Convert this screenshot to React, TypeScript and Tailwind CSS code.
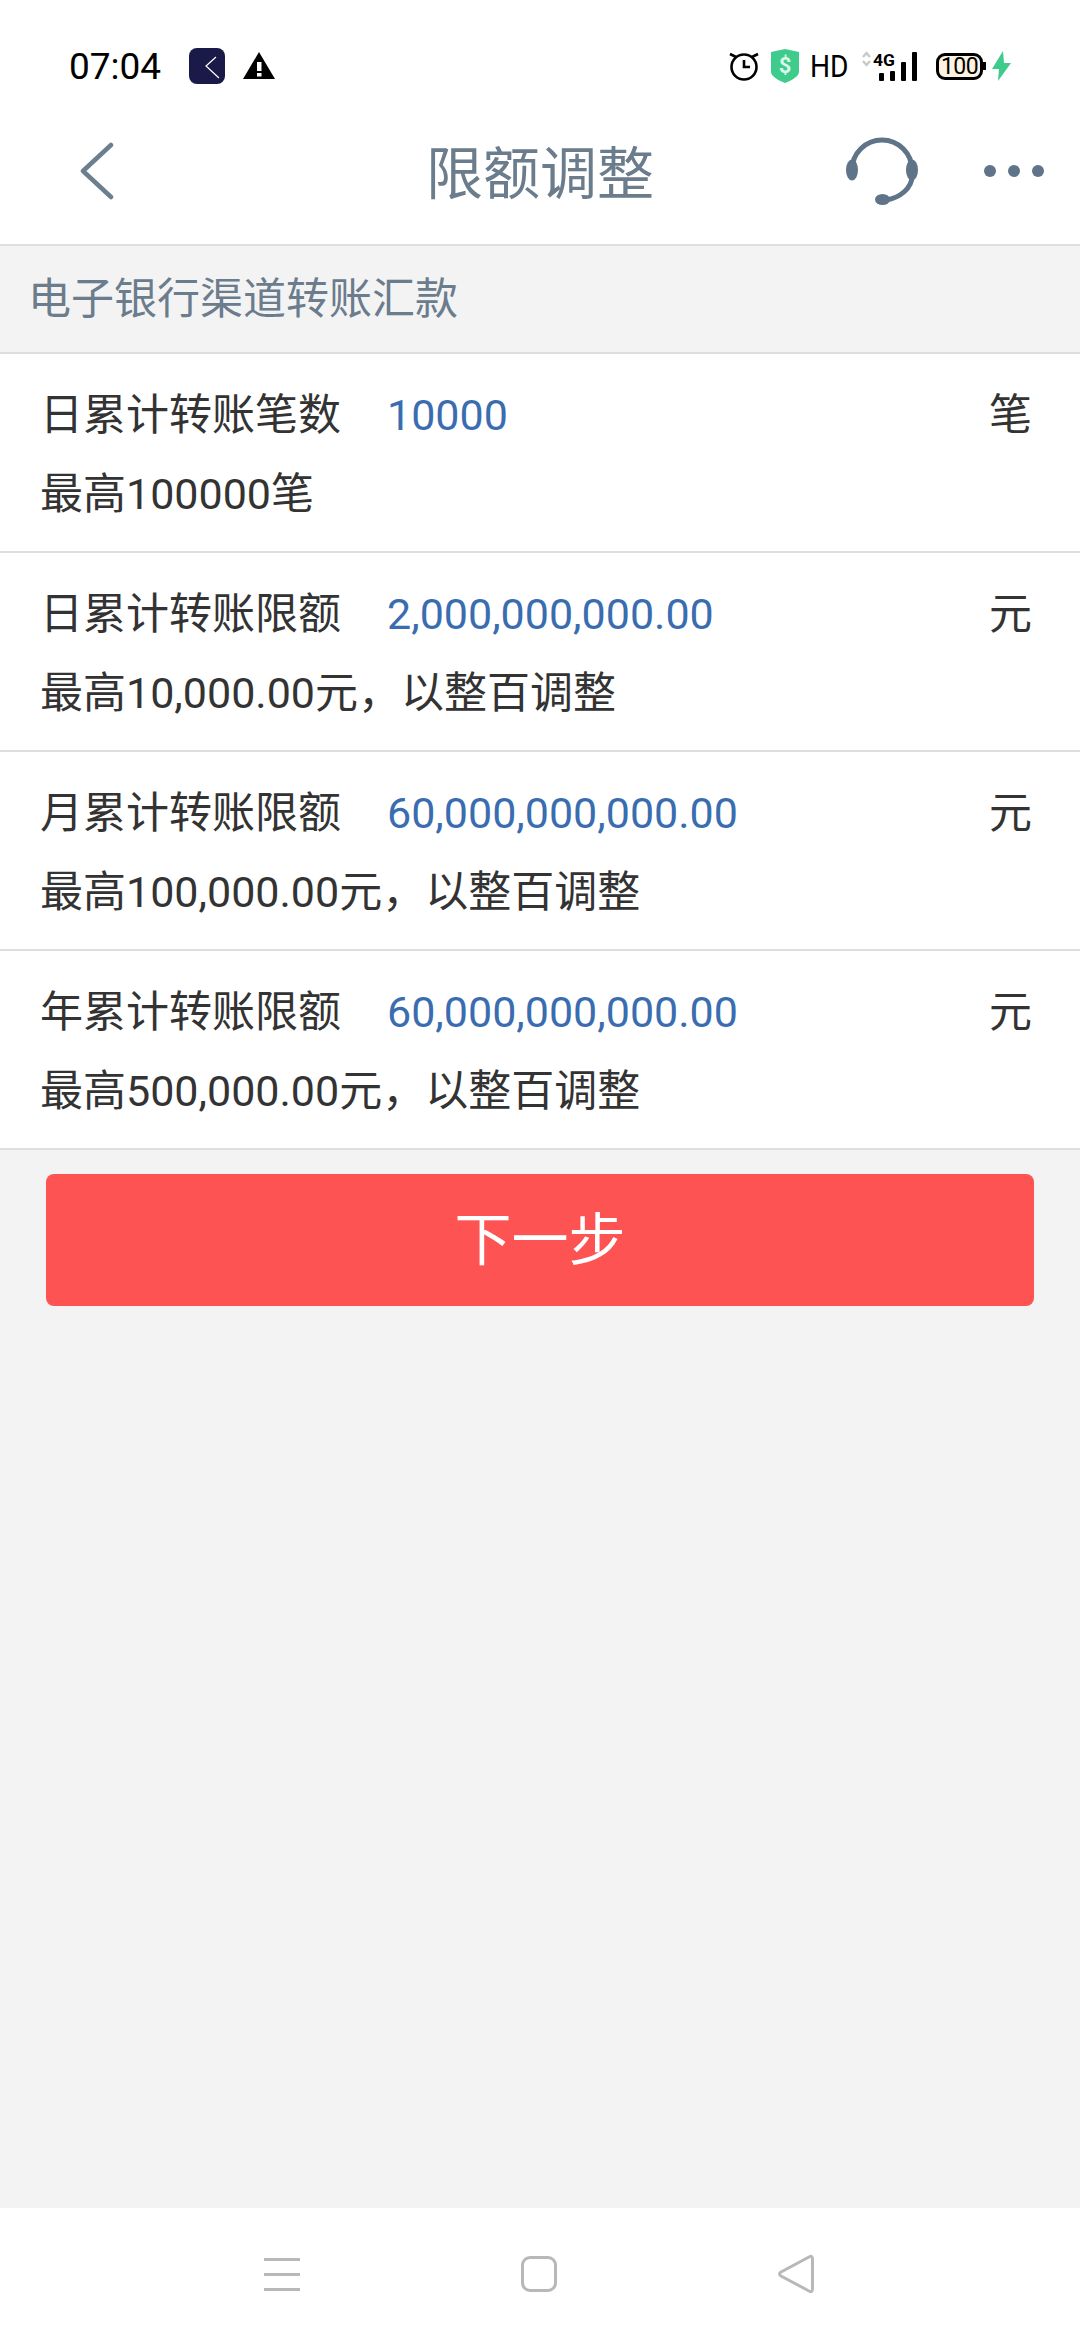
const FONT = "font-['Roboto','Noto_Sans_CJK_SC',sans-serif]"

const limits = [
  { label: '日累计转账笔数', value: '10000', unit: '笔', hint: '最高100000笔' },
  { label: '日累计转账限额', value: '2,000,000,000.00', unit: '元', hint: '最高10,000.00元，以整百调整' },
  { label: '月累计转账限额', value: '60,000,000,000.00', unit: '元', hint: '最高100,000.00元，以整百调整' },
  { label: '年累计转账限额', value: '60,000,000,000.00', unit: '元', hint: '最高500,000.00元，以整百调整' },
]

function StatusBar() {
  return (
    <div className="flex h-[122px] items-center justify-between pl-[69px] pr-[69px] pt-[10px] bg-white">
      <div className="flex items-center">
        <span className="w-[120px] text-[37px] leading-none text-black">07:04</span>
        <svg width="36" height="36" viewBox="0 0 36 36" fill="none">
          <rect width="36" height="36" rx="8" fill="#1a1a48" />
          <path d="M27 9 17 18l13 12" stroke="#fff" strokeWidth="1.2" />
        </svg>
        <svg className="ml-[18px]" width="32" height="28" viewBox="0 0 32 28">
          <path d="M16 0 32 27H0Z" fill="#000" />
          <rect x="14" y="10" width="4.5" height="9" fill="#fff" />
          <rect x="14" y="21" width="4.5" height="3.5" fill="#fff" />
        </svg>
      </div>
      <div className="flex items-center">
        <svg width="30" height="32" viewBox="0 0 30 32" fill="none" stroke="#000" strokeWidth="2.6">
          <circle cx="15" cy="17" r="12.5" />
          <path d="M15 10v7h6M1 4l6 3M29 4l-6 3" />
        </svg>
        <svg className="ml-[12px]" width="28" height="34" viewBox="0 0 28 34">
          <path d="M14 0 28 3v20c0 4-8 9-14 11C8 32 0 27 0 23V3Z" fill="#3ecb8b" />
          <text x="14" y="24" textAnchor="middle" fontSize="22" fontWeight="700" fill="#d9f7e8" fontFamily="Roboto">$</text>
        </svg>
        <span className="ml-[11px] w-[36px] origin-left scale-x-[0.88] font-['Roboto'] text-[32px] leading-none text-black">HD</span>
        <svg className="ml-[15px]" width="57" height="32" viewBox="0 0 57 32">
          <path d="M2 7l3.500-4 3.500 4M2 11l3.500 4 3.500-4" fill="none" stroke="#c8c8c8" strokeWidth="2.4" />
          <text x="12" y="16" fontSize="17" fontWeight="700" fill="#000" fontFamily="Roboto" textLength="22" lengthAdjust="spacingAndGlyphs">4G</text>
          <rect x="18" y="23" width="5" height="8" rx="1" fill="#000" />
          <rect x="29" y="21" width="5" height="10" rx="1" fill="#000" />
          <rect x="40" y="12" width="5" height="19" rx="1" fill="#000" />
          <rect x="51" y="2" width="5" height="29" rx="1" fill="#000" />
        </svg>
        <div className="ml-[18px] flex h-[27px] w-[47px] items-center justify-center rounded-[9px] border-[3px] border-black bg-[#fdf3e0] text-[23px] leading-none tracking-tight text-black">
          100
        </div>
        <div className="h-2 w-[3px] bg-black" />
        <svg className="ml-[6px]" width="19" height="30" viewBox="0 0 19 30">
          <path d="M11 0 0 18h7l-1 12 13-18h-7Z" fill="#3ecb8b" />
        </svg>
      </div>
    </div>
  )
}

function Header() {
  return (
    <div className="grid h-[124px] grid-cols-[1fr_auto_1fr] items-center border-b-2 border-[#dedede] bg-white pb-[24px]">
      <div className="pl-[80px]">
        <svg width="34" height="58" viewBox="0 0 34 58" fill="none" stroke="#6b7f8f" strokeWidth="4.5" strokeLinecap="round" strokeLinejoin="round">
          <path d="M31 3 3 29l28 26" />
        </svg>
      </div>
      <h1 className="pt-[6px] text-[57px] leading-none text-[#6b7c8c]">限额调整</h1>
      <div className="flex items-center justify-end gap-[66px] pr-[36px]">
        <svg width="72" height="70" viewBox="0 0 72 70" fill="none">
          <path d="M6 34A30 30 0 0 1 66 34v6c0 12-12 22-26 24" stroke="#5f7488" strokeWidth="5" />
          <ellipse cx="6" cy="34" rx="6" ry="10.500" fill="#5f7488" />
          <ellipse cx="66" cy="34" rx="6" ry="10.500" fill="#5f7488" />
          <ellipse cx="36.500" cy="63.500" rx="7.500" ry="5.500" fill="#5f7488" />
        </svg>
        <div className="flex items-center gap-3">
          <div className="h-3 w-3 rounded-full bg-[#5f7488]" />
          <div className="h-3 w-3 rounded-full bg-[#5f7488]" />
          <div className="h-3 w-3 rounded-full bg-[#5f7488]" />
        </div>
      </div>
    </div>
  )
}

export default function App() {
  return (
    <div className={`flex h-[2340px] w-[1080px] flex-col bg-[#f3f3f4] ${FONT}`}>
      <StatusBar />
      <Header />

      {/* Section title */}
      <div className="flex h-[108px] items-center border-b-2 border-[#dedede] pl-[28px] text-[43px] text-[#6b7c8c]">
        电子银行渠道转账汇款
      </div>

      {/* Limit rows */}
      {limits.map((row) => (
        <div key={row.label} className="flex h-[199px] flex-col justify-center border-b-2 border-[#dedede] bg-white pl-10 pr-[48px] pt-[5px] text-[43px] text-[#333]">
          <div className="flex h-[79px] items-center">
            <span className="w-[347px]">{row.label}</span>
            <span className="flex-1 text-[#3a6db0]">{row.value}</span>
            <span>{row.unit}</span>
          </div>
          <div className="flex h-[79px] items-center">{row.hint}</div>
        </div>
      ))}

      <button className="mx-[46px] mt-[24px] h-[132px] rounded-[8px] bg-[#fe5353] pt-[2px] text-[57px] text-white">
        下一步
      </button>

      <div className="flex-1" />

      {/* Nav bar */}
      <div className="flex h-[132px] items-center justify-between bg-white pl-[264px] pr-[266px]">
        <div className="flex w-9 flex-col gap-3">
          <div className="h-[3px] bg-[#b8b8b8]" />
          <div className="h-[3px] bg-[#b8b8b8]" />
          <div className="h-[3px] bg-[#b8b8b8]" />
        </div>
        <div className="h-9 w-9 rounded-[9px] border-[3px] border-[#b8b8b8]" />
        <svg width="36" height="40" viewBox="0 0 36 40" fill="none" stroke="#b8b8b8" strokeWidth="3">
          <path d="M31 3Q34.500 1 34.500 5V35Q34.500 39 31 37L3 22Q0 20 3 18Z" />
        </svg>
      </div>
    </div>
  )
}
